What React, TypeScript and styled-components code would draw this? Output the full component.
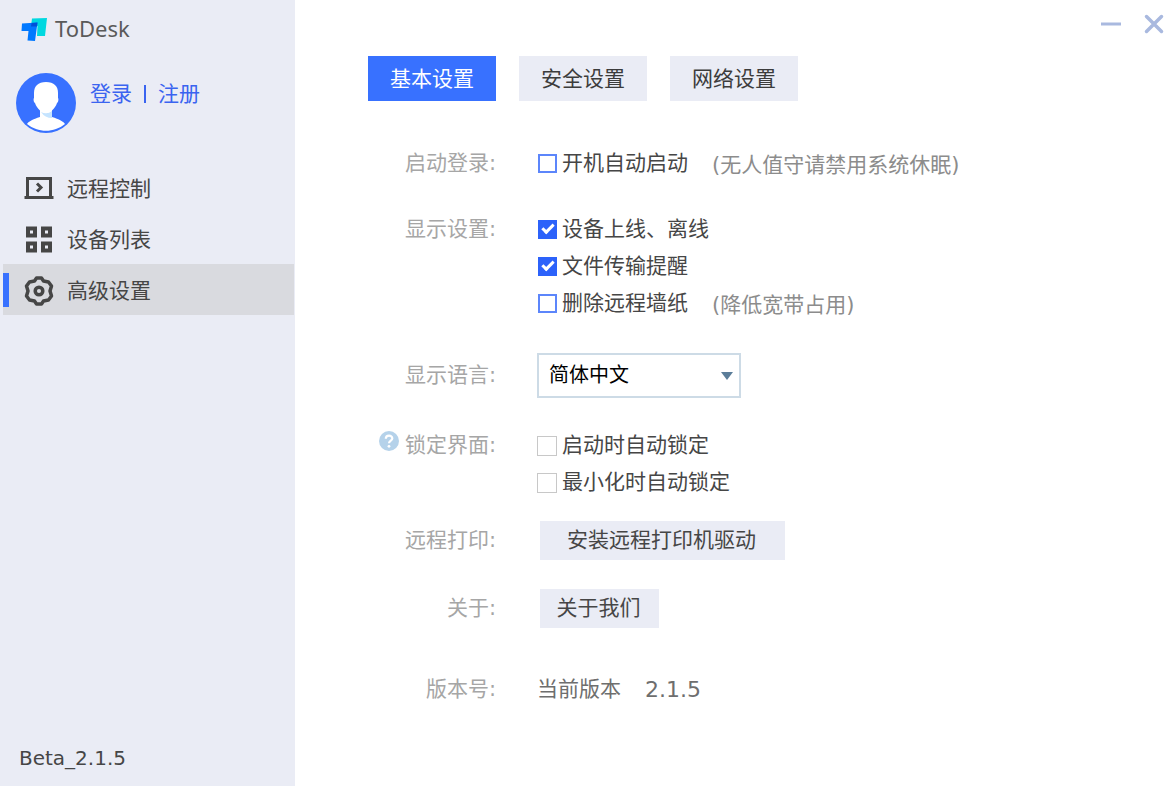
import React from "react";
import styled, { createGlobalStyle } from "styled-components";

const GlobalStyle = createGlobalStyle`
  *, *::before, *::after { box-sizing: border-box; }
  body {
    margin: 0;
    background: #ffffff;
    color: #464646;
    font-family: "DejaVu Sans", "Noto Sans CJK SC", sans-serif;
    font-size: 21px;
    font-weight: 400;
    line-height: 37px;
  }
  button, select, input { font: inherit; color: inherit; margin: 0; }
`;

const Window = styled.div`
  display: flex;
  min-height: 100vh;
`;

const Sidebar = styled.aside`
  flex: 0 0 295px;
  display: flex;
  flex-direction: column;
  background: #eaecf5;
`;

const Brand = styled.div`
  display: flex;
  align-items: center;
  gap: 7px;
  height: 56px;
  padding-left: 21px;
  font-family: "Noto Sans", sans-serif;
  font-size: 22px;
  color: #5a5a5a;
`;

const Account = styled.div`
  display: flex;
  gap: 14px;
  padding: 17px 0 0 16px;
`;

const AccountLinks = styled.div`
  display: flex;
  align-items: center;
  gap: 12px;
  height: 42px;
`;

const AccountLink = styled.a`
  color: #3a64f0;
  text-decoration: none;
`;

const LinkDivider = styled.span`
  width: 2px;
  height: 18px;
  background: #3a64f0;
`;

const Nav = styled.nav`
  display: flex;
  flex-direction: column;
  margin-top: 29px;
  padding: 0 1px 0 3px;
`;

const NavItem = styled.button<{ $active?: boolean }>`
  position: relative;
  display: flex;
  align-items: center;
  gap: 13px;
  height: 51px;
  padding: 3px 0 0 21px;
  border: 0;
  background: ${(p) => (p.$active ? "#d9dadf" : "transparent")};
  text-align: left;
  cursor: pointer;
`;

const ActiveMark = styled.span`
  position: absolute;
  left: 0;
  top: 9px;
  bottom: 8px;
  width: 6px;
  background: #3871ff;
`;

const Build = styled.div`
  margin-top: auto;
  padding: 0 0 9px 19px;
  font-size: 20px;
`;

const Main = styled.main`
  flex: 1;
  min-width: 0;
`;

const TitleBar = styled.header`
  display: flex;
  justify-content: flex-end;
  gap: 20px;
  height: 56px;
  padding: 12px 10px 0 0;
`;

const WindowButton = styled.button`
  width: 24px;
  height: 24px;
  padding: 0;
  border: 0;
  background: none;
  cursor: pointer;

  svg { display: block; }
`;

const Content = styled.div`
  padding: 0 24px 24px 73px;
`;

const Tabs = styled.div`
  display: flex;
  gap: 23px;
  margin-bottom: 44px;
`;

const Tab = styled.button<{ $active?: boolean }>`
  width: 128px;
  height: 45px;
  padding: 2px 0 0;
  border: 0;
  background: ${(p) => (p.$active ? "#3871ff" : "#eaecf5")};
  color: ${(p) => (p.$active ? "#ffffff" : "#3c3c3c")};
  cursor: pointer;
`;

const Row = styled.section<{ $gap?: number }>`
  display: flex;
  gap: 41px;
  margin-top: ${(p) => p.$gap ?? 0}px;
`;

const RowLabel = styled.div<{ $height?: number }>`
  flex: 0 0 128px;
  display: flex;
  justify-content: flex-end;
  line-height: ${(p) => p.$height ?? 37}px;
  color: #a6a6a6;
  white-space: nowrap;
`;

const HelpButton = styled.button`
  width: 20px;
  height: 20px;
  margin: 4px 6px 0 0;
  padding: 0;
  border: 0;
  background: none;
  cursor: pointer;

  svg { display: block; }
`;

const Options = styled.div`
  display: flex;
  flex-direction: column;
`;

const Option = styled.div`
  display: flex;
  height: 37px;
`;

const CheckLabel = styled.label`
  display: flex;
  align-items: center;
  gap: 5px;
  cursor: pointer;
`;

const Checkbox = styled.input<{ $muted?: boolean }>`
  appearance: none;
  display: grid;
  place-items: center;
  width: ${(p) => (p.$muted ? 20 : 19)}px;
  height: ${(p) => (p.$muted ? 20 : 19)}px;
  margin-left: ${(p) => (p.$muted ? 0 : 1)}px;
  border: ${(p) => (p.$muted ? "1px solid #c8c8c8" : "2px solid #5c86fb")};
  background: #ffffff;

  &:checked {
    border-color: #2c62fa;
    background: #2c62fa;
  }

  &:checked::before {
    content: "";
    width: 12px;
    height: 7px;
    margin-bottom: 4px;
    border: solid #ffffff;
    border-width: 0 0 3px 3px;
    transform: rotate(-45deg);
  }
`;

const Note = styled.span`
  padding: 3px 0 0 24px;
  line-height: 34px;
  color: #8c8c8c;
`;

const SelectBox = styled.div`
  display: grid;
  align-items: center;
  width: 204px;

  > * { grid-area: 1 / 1; }
  > svg { justify-self: end; margin-right: 7px; pointer-events: none; }
`;

const Select = styled.select`
  appearance: none;
  width: 100%;
  height: 45px;
  padding: 0 28px 0 10px;
  border: 2px solid #cddbe6;
  border-radius: 0;
  background: #ffffff;
  color: #000000;
  font-size: 20px;
`;

const ActionButton = styled.button<{ $wide?: boolean }>`
  width: ${(p) => (p.$wide ? 245 : 119)}px;
  height: 39px;
  margin-left: 3px;
  padding: 0 2px 0 0;
  border: 0;
  background: #eaecf5;
  cursor: pointer;
`;

const Version = styled.div`
  display: flex;
  gap: 24px;
  color: #6e6e6e;
`;

const VersionNumber = styled.span`
  font-size: 22px;
`;

const Logo = () => (
  <svg width="27" height="28" viewBox="0 -4 27 28" aria-hidden="true">
    <path d="M11 0.500L26 0L24 18H16L16.500 8H10Z" fill="#00d8e0" />
    <path d="M1 5.500L16.500 4.500L14 23L6.500 22.500L7.500 13H.5Z" fill="#0078ff" />
    <path d="M10.500 5L16.500 4.500L16 8.500H10Z" fill="#0050d8" />
  </svg>
);

const Avatar = () => (
  <svg width="60" height="60" viewBox="0 0 60 60" aria-hidden="true">
    <circle cx="30" cy="30" r="30" fill="#3871ff" />
    <path d="M24 34H36V44C43 46 48 49 49 51C38 60 22 60 11 51C12 49 17 46 24 44Z" fill="#fff" />
    <path d="M25 39Q31 42 36 38V45Q29 45 25 39Z" fill="#c5e4ff" />
    <path d="M30 9C38 9 42 13 42 20V25C43 26 42 30 41 30C39 36 34 40 30 40C26 40 21 36 19 30C18 30 17 26 18 25V20C18 13 22 9 30 9Z" fill="#fff" />
  </svg>
);

const LaptopIcon = () => (
  <svg width="30" height="30" viewBox="0 0 30 30" fill="none" stroke="#464646" strokeWidth="3" aria-hidden="true">
    <path d="M3.500 23V4.500H26.500V23M.5 23.500H29.500" />
    <path d="M13 9.500L17 13.500L13 17.500" />
  </svg>
);

const GridIcon = () => (
  <svg width="30" height="30" viewBox="0 0 30 30" fill="none" stroke="#464646" strokeWidth="4" aria-hidden="true">
    <path d="M4 3.500H11V10.500H4ZM19 3.500H26V10.500H19ZM4 18.500H11V25.500H4ZM19 18.500H26V25.500H19Z" />
  </svg>
);

const GearIcon = () => (
  <svg width="30" height="30" viewBox="0 0 30 30" fill="none" stroke="#464646" strokeWidth="3.500" strokeLinejoin="round" aria-hidden="true">
    <path d="M12.500 2H17.500L19.500 5L24.500 6L27.500 10L26 15L27.500 20L24.500 24L19.500 25L17.500 28H12.500L10.500 25L5.500 24L2.500 20L4 15L2.500 10L5.500 6L10.500 5Z" />
    <circle cx="15" cy="15" r="3.800" />
  </svg>
);

const HelpIcon = () => (
  <svg width="20" height="20" viewBox="0 0 20 20" fill="none" aria-hidden="true">
    <circle cx="10" cy="10" r="10" fill="#b5d2ea" />
    <path d="M6.800 7.800C6.800 3.600 13.300 3.800 13.300 7.500C13.300 9.600 10 9.700 10 12.300" stroke="#fff" strokeWidth="2.200" />
    <circle cx="10" cy="15.300" r="1.400" fill="#fff" />
  </svg>
);

const navItems = [
  { label: "远程控制", Icon: LaptopIcon },
  { label: "设备列表", Icon: GridIcon },
  { label: "高级设置", Icon: GearIcon, active: true },
];

const Check = ({ label, checked, muted }: { label: string; checked?: boolean; muted?: boolean }) => (
  <CheckLabel>
    <Checkbox type="checkbox" defaultChecked={checked} $muted={muted} />
    {label}
  </CheckLabel>
);

export default function App() {
  return (
    <Window>
      <GlobalStyle />
      <Sidebar>
        <Brand><Logo />ToDesk</Brand>
        <Account>
          <Avatar />
          <AccountLinks>
            <AccountLink href="#login">登录</AccountLink>
            <LinkDivider />
            <AccountLink href="#register">注册</AccountLink>
          </AccountLinks>
        </Account>
        <Nav>
          {navItems.map(({ label, Icon, active }) => (
            <NavItem key={label} type="button" $active={active}>
              {active && <ActiveMark />}
              <Icon />
              {label}
            </NavItem>
          ))}
        </Nav>
        <Build>Beta_2.1.5</Build>
      </Sidebar>
      <Main>
        <TitleBar>
          <WindowButton type="button" aria-label="最小化">
            <svg width="24" height="24" viewBox="0 0 24 24"><path d="M3 12H23" stroke="#a9b9df" strokeWidth="3" /></svg>
          </WindowButton>
          <WindowButton type="button" aria-label="关闭">
            <svg width="24" height="24" viewBox="0 0 24 24"><path d="M4.500 4.500L19.500 19.500M19.500 4.500L4.500 19.500" stroke="#a9b9df" strokeWidth="3.500" strokeLinecap="round" /></svg>
          </WindowButton>
        </TitleBar>
        <Content>
          <Tabs>
            <Tab type="button" $active>基本设置</Tab>
            <Tab type="button">安全设置</Tab>
            <Tab type="button">网络设置</Tab>
          </Tabs>
          <Row>
            <RowLabel>启动登录:</RowLabel>
            <Option>
              <Check label="开机自动启动" />
              <Note>(无人值守请禁用系统休眠)</Note>
            </Option>
          </Row>
          <Row $gap={29}>
            <RowLabel>显示设置:</RowLabel>
            <Options>
              <Option><Check label="设备上线、离线" checked /></Option>
              <Option><Check label="文件传输提醒" checked /></Option>
              <Option>
                <Check label="删除远程墙纸" />
                <Note>(降低宽带占用)</Note>
              </Option>
            </Options>
          </Row>
          <Row $gap={31}>
            <RowLabel $height={45}><label htmlFor="language">显示语言:</label></RowLabel>
            <SelectBox>
              <Select id="language" defaultValue="zh">
                <option value="zh">简体中文</option>
              </Select>
              <svg width="14" height="8" viewBox="0 0 14 8" aria-hidden="true"><path d="M1 0H13L7 8Z" fill="#5b7d99" /></svg>
            </SelectBox>
          </Row>
          <Row $gap={29}>
            <RowLabel>
              <HelpButton type="button" aria-label="帮助"><HelpIcon /></HelpButton>
              锁定界面:
            </RowLabel>
            <Options>
              <Option><Check label="启动时自动锁定" muted /></Option>
              <Option><Check label="最小化时自动锁定" muted /></Option>
            </Options>
          </Row>
          <Row $gap={20}>
            <RowLabel $height={39}>远程打印:</RowLabel>
            <ActionButton type="button" $wide>安装远程打印机驱动</ActionButton>
          </Row>
          <Row $gap={29}>
            <RowLabel $height={39}>关于:</RowLabel>
            <ActionButton type="button">关于我们</ActionButton>
          </Row>
          <Row $gap={43}>
            <RowLabel>版本号:</RowLabel>
            <Version>当前版本<VersionNumber>2.1.5</VersionNumber></Version>
          </Row>
        </Content>
      </Main>
    </Window>
  );
}
